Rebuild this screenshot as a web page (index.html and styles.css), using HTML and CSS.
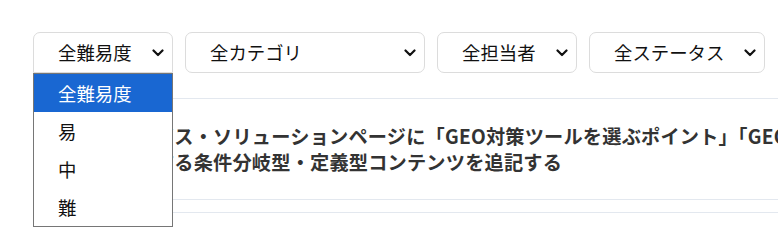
FILE: index.html
```html
<!DOCTYPE html>
<html lang="ja">
<head>
<meta charset="utf-8">
<title>タスク一覧</title>
<link rel="stylesheet" href="styles.css">
</head>
<body>
<div class="page">
  <div class="filters">
    <div class="select select-difficulty open">
      <span class="select-label">全難易度</span>
      <svg class="chevron" width="12" height="8" viewBox="0 0 12 8"><path d="M1.5 1.5l4.5 4.5 4.5-4.5" fill="none" stroke="#111" stroke-width="2.2" stroke-linecap="round" stroke-linejoin="round"/></svg>
      <ul class="dropdown">
        <li class="option selected">全難易度</li>
        <li class="option">易</li>
        <li class="option">中</li>
        <li class="option">難</li>
      </ul>
    </div>
    <div class="select select-category">
      <span class="select-label">全カテゴリ</span>
      <svg class="chevron" width="12" height="8" viewBox="0 0 12 8"><path d="M1.5 1.5l4.5 4.5 4.5-4.5" fill="none" stroke="#111" stroke-width="2.2" stroke-linecap="round" stroke-linejoin="round"/></svg>
    </div>
    <div class="select select-owner">
      <span class="select-label">全担当者</span>
      <svg class="chevron" width="12" height="8" viewBox="0 0 12 8"><path d="M1.5 1.5l4.5 4.5 4.5-4.5" fill="none" stroke="#111" stroke-width="2.2" stroke-linecap="round" stroke-linejoin="round"/></svg>
    </div>
    <div class="select select-status">
      <span class="select-label">全ステータス</span>
      <svg class="chevron" width="12" height="8" viewBox="0 0 12 8"><path d="M1.5 1.5l4.5 4.5 4.5-4.5" fill="none" stroke="#111" stroke-width="2.2" stroke-linecap="round" stroke-linejoin="round"/></svg>
    </div>
  </div>
  <div class="task-list">
    <div class="task-row">
      <p class="task-title">製品・サービス・ソリューションページに「GEO対策ツールを選ぶポイント」「GEO対策ツール<br>比較」に関する条件分岐型・定義型コンテンツを追記する</p>
    </div>
    <div class="task-row task-row-empty"></div>
  </div>
</div>
</body>
</html>
```

FILE: styles.css
```css
* { box-sizing: border-box; }

html, body {
  margin: 0;
  padding: 0;
  background: #ffffff;
  overflow: hidden;
}

body {
  font-family: "Noto Sans CJK JP", "Noto Sans", sans-serif;
  color: #111;
}

.page {
  width: 778px;
  height: 231px;
  overflow: hidden;
  padding-top: 32px;
}

.filters {
  display: flex;
  gap: 12px;
  padding-left: 33px;
  position: relative;
  z-index: 2;
}

.select {
  position: relative;
  height: 41px;
  border: 1px solid #dcdcdc;
  border-radius: 7px;
  background: #fff;
  display: flex;
  align-items: center;
  padding-left: 24px;
  font-size: 18.4px;
  line-height: 1;
  color: #111;
}

.select-difficulty { width: 140px; }
.select-category { width: 240px; }
.select-owner { width: 140px; }
.select-status { width: 176px; }

.select.open {
  border-bottom-left-radius: 0;
  border-bottom-right-radius: 0;
}

.chevron {
  position: absolute;
  right: 8px;
  top: 16px;
}

.dropdown {
  position: absolute;
  left: -1px;
  right: -1px;
  top: 40px;
  margin: 0;
  padding: 0;
  list-style: none;
  background: #fff;
  border: 1px solid #767676;
}

.option {
  height: 38px;
  display: flex;
  align-items: center;
  padding-left: 24px;
  font-size: 18.4px;
  color: #111;
}

.option.selected {
  background: #1967d2;
  color: #fff;
}

.task-list {
  margin-top: 25px;
  margin-left: 33px;
  border-top: 1px solid #e3e8ef;
  border-left: 1px solid #e9ecf1;
}

.task-row {
  height: 101px;
  border-bottom: 1px solid #e3e8ef;
  padding: 24px 0 0 24px;
}

.task-row-empty {
  height: 13px;
  padding: 0;
}

.task-title {
  margin: 0;
  width: 1000px;
  font-size: 19.2px;
  line-height: 26px;
  font-weight: 700;
  color: #333;
  letter-spacing: 0.2px;
  white-space: nowrap;
}
```
